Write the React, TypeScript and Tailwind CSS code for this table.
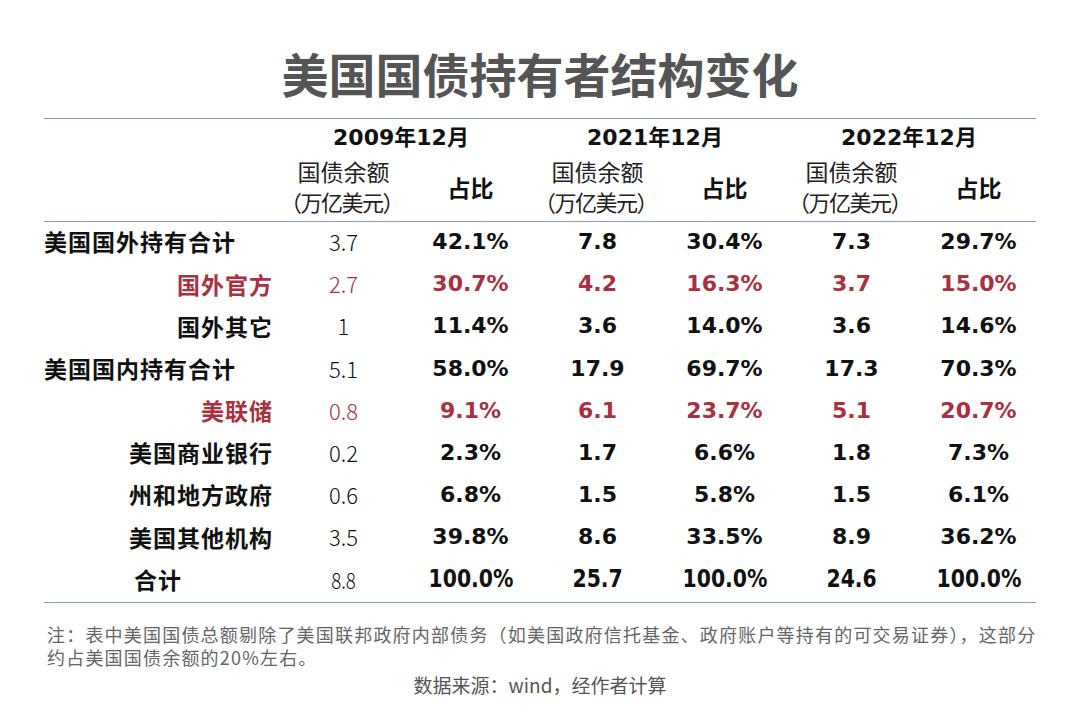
import React from "react";

const RED = "text-[#a8303f]";
const CJK = { fontFamily: '"Noto Sans CJK SC", sans-serif' };
const NUM = { fontFamily: '"DejaVu Sans", "Noto Sans CJK SC", sans-serif' };

type Row = {
  label: string;
  kind: "top" | "sub" | "total";
  red?: boolean;
  v: string[];
};

const rows: Row[] = [
  { label: "美国国外持有合计", kind: "top", v: ["3.7", "42.1%", "7.8", "30.4%", "7.3", "29.7%"] },
  { label: "国外官方", kind: "sub", red: true, v: ["2.7", "30.7%", "4.2", "16.3%", "3.7", "15.0%"] },
  { label: "国外其它", kind: "sub", v: ["1", "11.4%", "3.6", "14.0%", "3.6", "14.6%"] },
  { label: "美国国内持有合计", kind: "top", v: ["5.1", "58.0%", "17.9", "69.7%", "17.3", "70.3%"] },
  { label: "美联储", kind: "sub", red: true, v: ["0.8", "9.1%", "6.1", "23.7%", "5.1", "20.7%"] },
  { label: "美国商业银行", kind: "sub", v: ["0.2", "2.3%", "1.7", "6.6%", "1.8", "7.3%"] },
  { label: "州和地方政府", kind: "sub", v: ["0.6", "6.8%", "1.5", "5.8%", "1.5", "6.1%"] },
  { label: "美国其他机构", kind: "sub", v: ["3.5", "39.8%", "8.6", "33.5%", "8.9", "36.2%"] },
  { label: "合计", kind: "total", v: ["8.8", "100.0%", "25.7", "100.0%", "24.6", "100.0%"] },
];

function Year({ y }: { y: string }) {
  return (
    <div className="text-center pr-[12px]">
      <span style={NUM}>{y}</span>
      <span style={CJK}>年</span>
      <span style={NUM}>12</span>
      <span style={CJK}>月</span>
    </div>
  );
}

export default function App() {
  return (
    <div className="w-[1080px] h-[720px] bg-white overflow-hidden relative text-[#111]" style={CJK}>
      <div className="h-[118px] flex justify-center pt-[48px]">
        <h1 className="text-[47px] font-bold text-[#555555] leading-[50px]" style={CJK}>
          美国国债持有者结构变化
        </h1>
      </div>
      <div className="ml-[44px] w-[992px] border-t-[1.5px] border-b-[1.5px] border-[#7f9cc4]">
        {/* header */}
        <div className="border-b-[1.5px] border-[#7f9cc4]">
          <div className="grid grid-cols-[236px_254px_254px_254px] h-[34px] items-center text-[22px] font-bold">
            <div />
            <Year y="2009" />
            <Year y="2021" />
            <Year y="2022" />
          </div>
          <div className="grid grid-cols-[236px_repeat(6,127px)] h-[68px] items-center text-[23px] text-[#222]">
            <div />
            {[0, 1, 2].map((i) => (
              <React.Fragment key={i}>
                <div className="text-center pb-[2px]">
                  <div className="leading-[30px]">国债余额</div>
                  <div className="leading-[30px] text-[22px] tracking-[-1.5px] -ml-[4px]">（万亿美元）</div>
                </div>
                <div className="text-center font-bold text-[#111]">占比</div>
              </React.Fragment>
            ))}
          </div>
        </div>
        {/* body */}
        {rows.map((r) => (
          <div
            key={r.label}
            className={`grid grid-cols-[236px_repeat(6,127px)] h-[42.2px] items-center pb-[3px] ${r.red ? RED : "text-[#111]"}`}
          >
            <div
              className={`font-bold text-[23px] tracking-[1px] ${
                r.kind === "top" ? "text-left" : r.kind === "sub" ? "text-right pr-[7px]" : "text-left pl-[90px]"
              }`}
            >
              {r.label}
            </div>
            {r.v.map((val, j) =>
              j === 0 ? (
                <div key={j} className="text-center font-light text-[22px]">
                  {r.kind === "total" ? (
                    <span className="inline-block scale-x-[0.85]">{val}</span>
                  ) : (
                    val
                  )}
                </div>
              ) : r.kind === "total" ? (
                <div key={j} className="text-center font-bold text-[24px]" style={NUM}>
                  <span className="inline-block scale-x-[0.85]">{val}</span>
                </div>
              ) : (
                <div key={j} className="text-center font-bold text-[22px]" style={NUM}>
                  {val}
                </div>
              )
            )}
          </div>
        ))}
      </div>
      <div className="ml-[47px] mt-[20px] w-[1008px] text-[18px] tracking-[1.2px] leading-[23px] text-[#666666]">
        注：表中美国国债总额剔除了美国联邦政府内部债务（如美国政府信托基金、政府账户等持有的可交易证券），这部分约占美国国债余额的20%左右。
      </div>
      <div className="mt-[2px] text-center text-[19px] text-[#555555]">
        数据来源：wind，经作者计算
      </div>
    </div>
  );
}
